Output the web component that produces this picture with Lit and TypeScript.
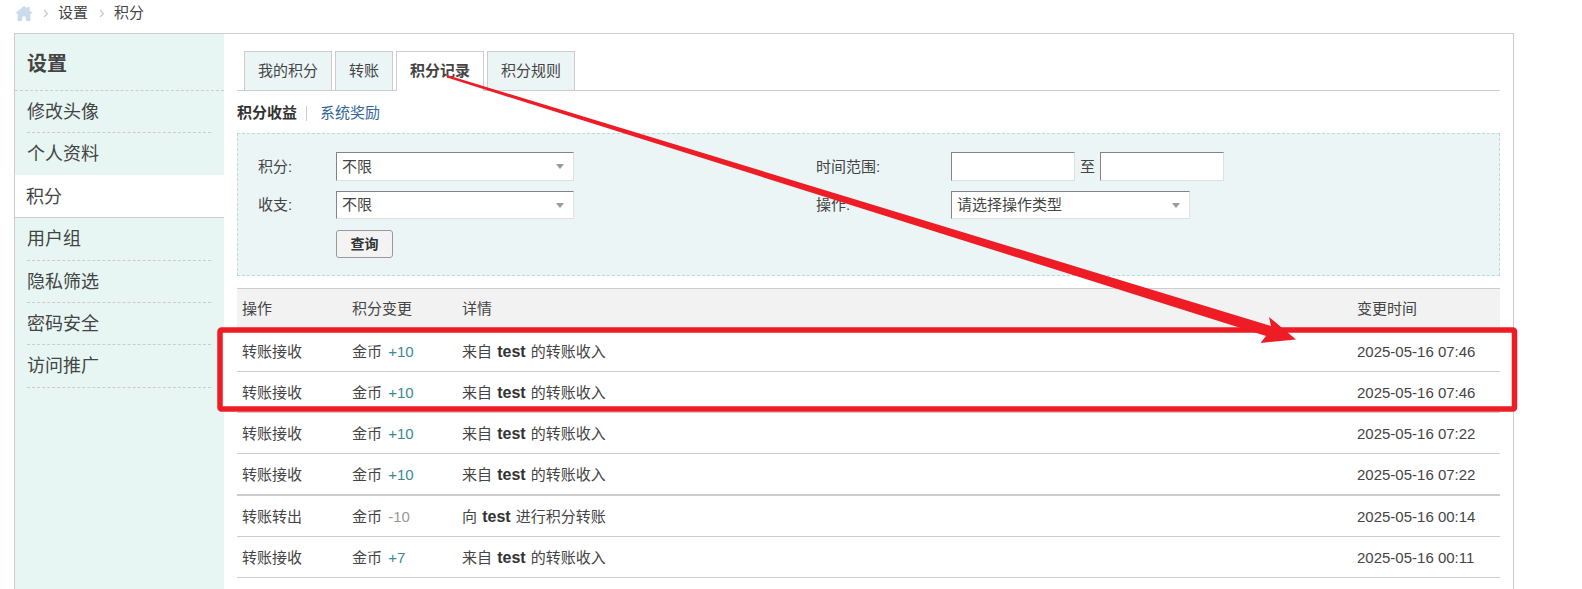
import { LitElement, html, css, svg } from "lit";
import { customElement } from "lit/decorators.js";

const rows = [
  { op: "转账接收", amt: "+10", pre: "来自", post: "的转账收入", time: "2025-05-16 07:46" },
  { op: "转账接收", amt: "+10", pre: "来自", post: "的转账收入", time: "2025-05-16 07:46" },
  { op: "转账接收", amt: "+10", pre: "来自", post: "的转账收入", time: "2025-05-16 07:22" },
  { op: "转账接收", amt: "+10", pre: "来自", post: "的转账收入", time: "2025-05-16 07:22", thick: true },
  { op: "转账转出", amt: "-10", pre: "向", post: "进行积分转账", time: "2025-05-16 00:14" },
  { op: "转账接收", amt: "+7", pre: "来自", post: "的转账收入", time: "2025-05-16 00:11" },
];

const chevron = svg`<svg class="chev" width="6" height="9" viewBox="0 0 6 9"><path d="M1 1l3.5 3.5L1 8" fill="none" stroke="#c4c9cc" stroke-width="1.2"/></svg>`;

@customElement("app-root")
export class AppRoot extends LitElement {
  static styles = css`
    :host {
      display: block;
      position: relative;
      width: 1582px;
      height: 589px;
      overflow: hidden;
      background: #fff;
      font: 15px/20px "Liberation Sans", "Noto Sans CJK SC", sans-serif;
      color: #444;
    }
    .crumbs {
      display: flex;
      align-items: center;
      height: 26px;
      margin-bottom: 7px;
      padding-left: 15px;
    }
    .crumbs .home { margin-right: 10px; }
    .crumbs .chev { margin-right: 9px; }
    .crumbs span { margin-right: 11px; }
    .frame {
      display: flex;
      width: 1498px;
      height: 600px;
      margin-left: 14px;
      border: 1px solid #ccc;
    }
    aside {
      flex: none;
      width: 209px;
      background: #e7f6f3;
    }
    .side-title {
      height: 56px;
      line-height: 60px;
      padding-left: 12px;
      font-size: 20px;
      font-weight: bold;
      border-bottom: 1px dashed #ccc;
    }
    .side-item {
      box-sizing: border-box;
      height: 42.4px;
      line-height: 43px;
      margin: 0 13px 0 12px;
      font-size: 18px;
      border-bottom: 1px dashed #ccc;
    }
    .side-item.on {
      height: 43.4px;
      margin: -1px 0 0 0;
      padding: 1px 0 0 11px;
      background: #fff;
      border-bottom: 1px solid #ccc;
    }
    main {
      flex: 1;
      padding: 17px 13px 0;
    }
    .tabs {
      display: flex;
      gap: 3px;
      height: 39px;
      padding-left: 7px;
      border-bottom: 1px solid #ccc;
    }
    .tab {
      height: 38px;
      line-height: 38px;
      padding: 0 13px;
      background: #ebf5f6;
      border: 1px solid #ccc;
      border-bottom: none;
    }
    .tab.on {
      height: 39px;
      background: #fff;
      font-weight: bold;
    }
    .sub {
      display: flex;
      align-items: center;
      height: 42px;
      padding-top: 2px;
      box-sizing: border-box;
    }
    .sub b { color: #333; }
    .sub i {
      width: 1px;
      height: 15px;
      margin: 0 13px 0 9px;
      background: #ccc;
    }
    .sub a { color: #369; }
    .filter {
      box-sizing: border-box;
      display: grid;
      grid-template-columns: 78px 480px 135px 1fr;
      grid-template-rows: 29px 28px 28px;
      row-gap: 10px;
      align-items: center;
      height: 143px;
      padding: 18px 0 0 20px;
      background: #ebf5f6;
      border: 1px dashed #b9dcd6;
    }
    .field {
      box-sizing: border-box;
      display: flex;
      align-items: center;
      justify-content: space-between;
      width: 238px;
      height: 100%;
      padding: 0 9px 0 5px;
      background: #fff;
      border: 1px solid;
      border-color: #848484 #e0e0e0 #e0e0e0 #848484;
    }
    .field.wide { width: 239px; }
    .cell { height: 100%; display: flex; align-items: center; }
    .range { gap: 5px; }
    .input {
      box-sizing: border-box;
      width: 124px;
      height: 100%;
      background: #fff;
      border: 1px solid;
      border-color: #848484 #e0e0e0 #e0e0e0 #848484;
    }
    .caret {
      width: 0;
      height: 0;
      border: 4.5px solid transparent;
      border-top: 5px solid #999;
      border-bottom: none;
    }
    .btn {
      box-sizing: border-box;
      width: 57px;
      height: 100%;
      margin-top: 1px;
      font: bold 14px/26px "Liberation Sans", "Noto Sans CJK SC", sans-serif;
      color: #333;
      text-align: center;
      background: #f3f3f3;
      border: 1px solid #999;
      border-radius: 3px;
    }
    .table { margin-top: 12px; border-top: 1px solid #ccc; }
    .row {
      box-sizing: border-box;
      display: grid;
      grid-template-columns: 110px 110px 895px 1fr;
      align-items: center;
      height: 41px;
      padding: 1px 0 0 5px;
      border-bottom: 1px solid #ccc;
    }
    .row.head {
      height: 42px;
      padding: 0 0 2px 5px;
      background: #f2f2f2;
      border-bottom: none;
    }
    .row.thick { height: 42px; border-bottom-width: 2px; }
    .detail { word-spacing: 1px; }
    .row b {
      font-size: 16px;
      color: #333;
    }
    .gain, .loss { margin-left: 2px; }
    .gain { color: #3a8a94; }
    .loss { color: #999; }
    .mark {
      position: absolute;
      left: 0;
      top: 0;
      pointer-events: none;
    }
  `;

  render() {
    return html`
      <nav class="crumbs">
        <svg class="home" width="18" height="15" viewBox="0 0 18 15">
          <path d="M9 0L0 7.5h2.6V15h4.6v-4.6h3.6V15h4.6V7.5H18L14.6 4.6V1h-2.3v1.6z" fill="#c8dcea" />
        </svg>
        ${chevron}
        <span>设置</span>
        ${chevron}
        <span>积分</span>
      </nav>
      <div class="frame">
        <aside>
          <div class="side-title">设置</div>
          <div class="side-item">修改头像</div>
          <div class="side-item">个人资料</div>
          <div class="side-item on">积分</div>
          <div class="side-item">用户组</div>
          <div class="side-item">隐私筛选</div>
          <div class="side-item">密码安全</div>
          <div class="side-item">访问推广</div>
        </aside>
        <main>
          <div class="tabs">
            <div class="tab">我的积分</div>
            <div class="tab">转账</div>
            <div class="tab on">积分记录</div>
            <div class="tab">积分规则</div>
          </div>
          <div class="sub"><b>积分收益</b><i></i><a>系统奖励</a></div>
          <div class="filter">
            <div>积分:</div>
            <div class="cell"><div class="field"><span>不限</span><span class="caret"></span></div></div>
            <div>时间范围:</div>
            <div class="cell range"><div class="input"></div><span>至</span><div class="input"></div></div>
            <div>收支:</div>
            <div class="cell"><div class="field"><span>不限</span><span class="caret"></span></div></div>
            <div>操作:</div>
            <div class="cell"><div class="field wide"><span>请选择操作类型</span><span class="caret"></span></div></div>
            <div></div>
            <div class="cell"><div class="btn">查询</div></div>
          </div>
          <div class="table">
            <div class="row head"><div>操作</div><div>积分变更</div><div>详情</div><div>变更时间</div></div>
            ${rows.map(
              (r) => html`
                <div class="row ${r.thick ? "thick" : ""}">
                  <div>${r.op}</div>
                  <div>金币 <span class=${r.amt.startsWith("-") ? "loss" : "gain"}>${r.amt}</span></div>
                  <div class="detail">${r.pre} <b>test</b> ${r.post}</div>
                  <div>${r.time}</div>
                </div>
              `
            )}
          </div>
        </main>
      </div>
      <svg class="mark" width="1582" height="589" viewBox="0 0 1582 589">
        <rect x="220" y="330" width="1294.5" height="79" rx="1.5" fill="none" stroke="#ee1c25" stroke-width="5.5" />
        <path d="M447 75L1271 326L1269 317L1296 339.5L1260.5 343L1266 336L447 77.5Z" fill="#ee1c25" />
      </svg>
    `;
  }
}
